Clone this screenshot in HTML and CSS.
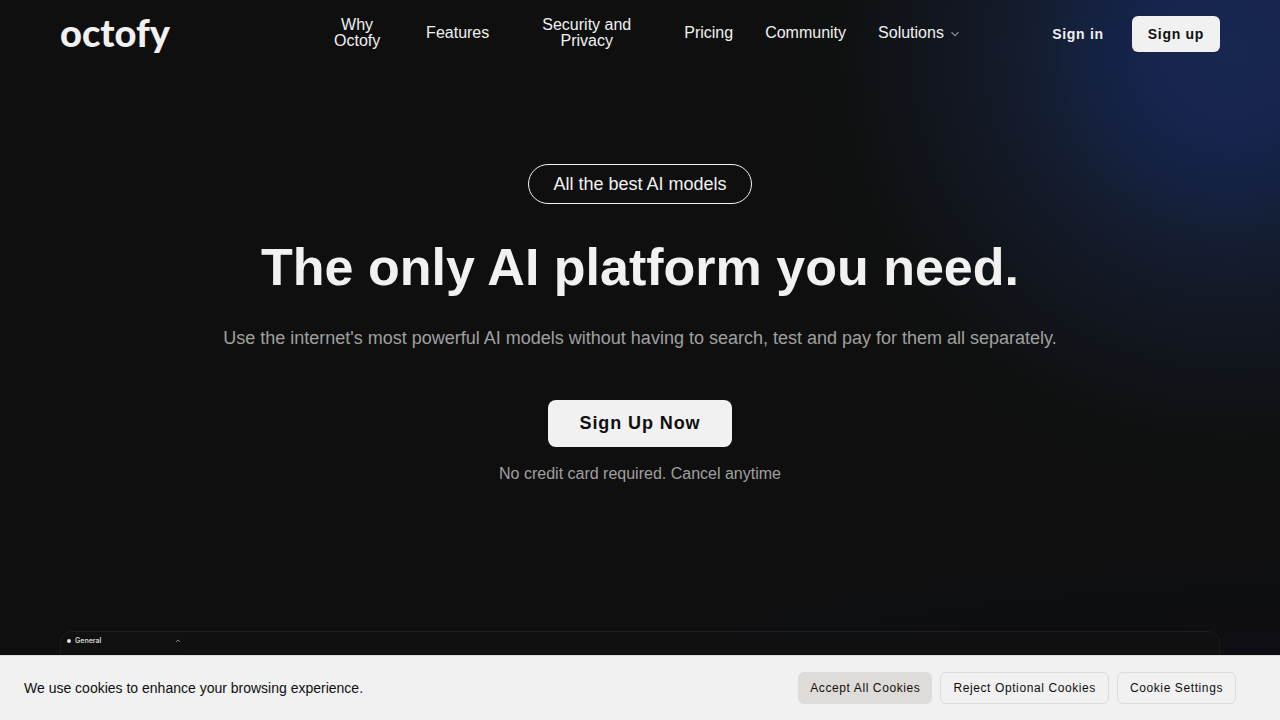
FILE: index.html
```html
<!DOCTYPE html>
<html lang="en">
<head>
<meta charset="utf-8">
<meta name="viewport" content="width=device-width, initial-scale=1">
<title>octofy</title>
<link rel="stylesheet" href="styles.css">
</head>
<body>
<div class="page">
  <header class="header">
    <a class="logo" href="#">octofy</a>
    <nav class="nav" aria-label="Main">
      <a class="nav-link nav-link-why" href="#">Why Octofy</a>
      <a class="nav-link" href="#">Features</a>
      <a class="nav-link nav-link-security" href="#">Security and Privacy</a>
      <a class="nav-link" href="#">Pricing</a>
      <a class="nav-link" href="#">Community</a>
      <button class="nav-link nav-menu" type="button">Solutions
        <svg class="chevron" viewBox="0 0 10 10" aria-hidden="true"><path d="M1.5 3.2 5 6.7 8.5 3.2"/></svg>
      </button>
    </nav>
    <div class="actions">
      <a class="sign-in" href="#">Sign in</a>
      <a class="sign-up" href="#">Sign up</a>
    </div>
  </header>
  <main class="hero">
    <p class="pill">All the best AI models</p>
    <h1 class="title">The only AI platform you need.</h1>
    <p class="lead">Use the internet's most powerful AI models without having to search, test and pay for them all separately.</p>
    <a class="cta" href="#">Sign Up Now</a>
    <p class="note">No credit card required. Cancel anytime</p>
  </main>
  <section class="preview" aria-label="App preview">
    <div class="preview-side">
      <div class="preview-head">
        <span class="dot"></span>
        <span class="preview-name">General</span>
        <svg class="preview-caret" viewBox="0 0 6 6" aria-hidden="true"><path d="M1 4 3 2 5 4"/></svg>
      </div>
      <div class="preview-list"></div>
    </div>
    <div class="preview-main"></div>
  </section>
</div>
<aside class="cookies" aria-label="Cookie consent">
  <p class="cookies-text">We use cookies to enhance your browsing experience.</p>
  <div class="cookies-actions">
    <button class="cookie-button cookie-accept" type="button">Accept All Cookies</button>
    <button class="cookie-button" type="button">Reject Optional Cookies</button>
    <button class="cookie-button" type="button">Cookie Settings</button>
  </div>
</aside>
</body>
</html>
```
FILE: styles.css
```css
* { box-sizing: border-box; }

body {
  margin: 0;
  background: #0f0f0f;
  color: #f1f1f1;
  font-family: "Liberation Sans", Arial, sans-serif;
}

p, h1 { margin: 0; }
a { color: inherit; text-decoration: none; }
button { font-family: inherit; color: inherit; cursor: pointer; }

.page {
  display: flex;
  flex-direction: column;
  min-height: 100vh;
  padding: 0 60px;
  background:
    radial-gradient(circle at calc(100% - 50px) 50px,
      #182652 0, #172550 60px, #16234a 100px, #152141 140px,
      #141f36 175px, #141b2c 215px, #131824 260px, #11151c 310px,
      #101317 350px, rgba(15, 17, 17, 0.8) 390px, rgba(15, 15, 15, 0) 450px),
    radial-gradient(ellipse 860px 230px at 100% 770px, #0e0e18 0, #0e0e14 50%, #0e0f11 80%, rgba(14, 14, 14, 0) 100%),
    #0f0f0f;
}

.header {
  display: grid;
  grid-template-columns: 1fr auto 1fr;
  align-items: center;
  padding-top: 16px;
}

.logo {
  padding-bottom: 4px;
  font-family: Lato, sans-serif;
  font-size: 38px;
  font-weight: 900;
  line-height: 32px;
}

.nav {
  display: flex;
  align-items: center;
  gap: 32px;
  padding-bottom: 2px;
}

.nav-link {
  font-size: 16px;
  line-height: 16px;
  text-align: center;
}

.nav-link-why { width: 74px; }
.nav-link-security { width: 131px; }

.nav-menu {
  display: flex;
  align-items: center;
  gap: 6px;
  padding: 0;
  border: 0;
  background: none;
}

.chevron {
  width: 10px;
  height: 10px;
  margin-top: 2px;
  fill: none;
  stroke: #8f9298;
  stroke-width: 1.2;
}

.actions {
  display: flex;
  justify-content: flex-end;
  align-items: center;
  gap: 28px;
  font-size: 14px;
  font-weight: 700;
  line-height: 20px;
  letter-spacing: 0.05em;
}

.sign-up {
  padding: 8px 16px;
  border-radius: 6px;
  background: #f1f1f1;
  color: #0f0f0f;
}

.hero {
  display: flex;
  flex-direction: column;
  align-items: center;
  padding-top: 112px;
  text-align: center;
}

.pill {
  padding: 8px 24px;
  border: 1px solid #f1f1f1;
  border-radius: 20px;
  font-size: 18px;
  line-height: 22px;
}

.title {
  margin-top: 35px;
  font-size: 52px;
  font-weight: 700;
  line-height: 56px;
}

.lead {
  margin-top: 29px;
  color: #a0a0a0;
  font-size: 18px;
  line-height: 28px;
}

.cta {
  margin-top: 48px;
  padding: 9px 32px 10px;
  border-radius: 8px;
  background: #f1f1f1;
  color: #0f0f0f;
  font-size: 18px;
  font-weight: 700;
  line-height: 28px;
  letter-spacing: 0.05em;
}

.note {
  margin-top: 15px;
  color: #a0a0a0;
  font-size: 16px;
  line-height: 24px;
}

.preview {
  display: flex;
  flex: 1;
  margin-top: 145px;
  border: 1px solid #1b1b1b;
  border-bottom: 0;
  border-radius: 12px 12px 0 0;
  background: #101010;
}

.preview-side {
  width: 123px;
  padding: 2px 0 0 3px;
}

.preview-head {
  display: flex;
  align-items: center;
  gap: 4px;
  height: 13px;
  padding: 0 2px;
  border: 1px solid #121212;
  border-radius: 3px;
}

.dot {
  width: 4px;
  height: 4px;
  border-radius: 50%;
  background: #e2e2e2;
}

.preview-name {
  color: #d5d5d5;
  font-family: Inter, sans-serif;
  font-size: 7px;
  font-weight: 600;
  line-height: 10px;
}

.preview-caret {
  width: 6px;
  height: 6px;
  margin-left: auto;
  fill: none;
  stroke: #a0a0a0;
  stroke-width: 0.8;
}

.preview-list {
  height: 60px;
  margin-top: 2px;
  border: 1px solid #151515;
  border-radius: 3px;
}

.preview-main {
  flex: 1;
  margin-top: 18px;
  border-top: 1px solid #151515;
}

.cookies {
  position: fixed;
  right: 0;
  bottom: 0;
  left: 0;
  display: flex;
  align-items: center;
  justify-content: space-between;
  padding: 16px 44px 16px 24px;
  border-top: 1px solid #dfdbd8;
  background: #f1f1f1;
  color: #0f0f0f;
}

.cookies-text {
  font-size: 14px;
  line-height: 20px;
}

.cookies-actions {
  display: flex;
  gap: 8px;
}

.cookie-button {
  padding: 7px 12px;
  border: 1px solid #dfdbd8;
  border-radius: 6px;
  background: transparent;
  font-size: 12px;
  line-height: 16px;
  letter-spacing: 0.05em;
}

.cookie-accept {
  padding: 8px 12px;
  border: 0;
  background: #dfdbd8;
}
```
